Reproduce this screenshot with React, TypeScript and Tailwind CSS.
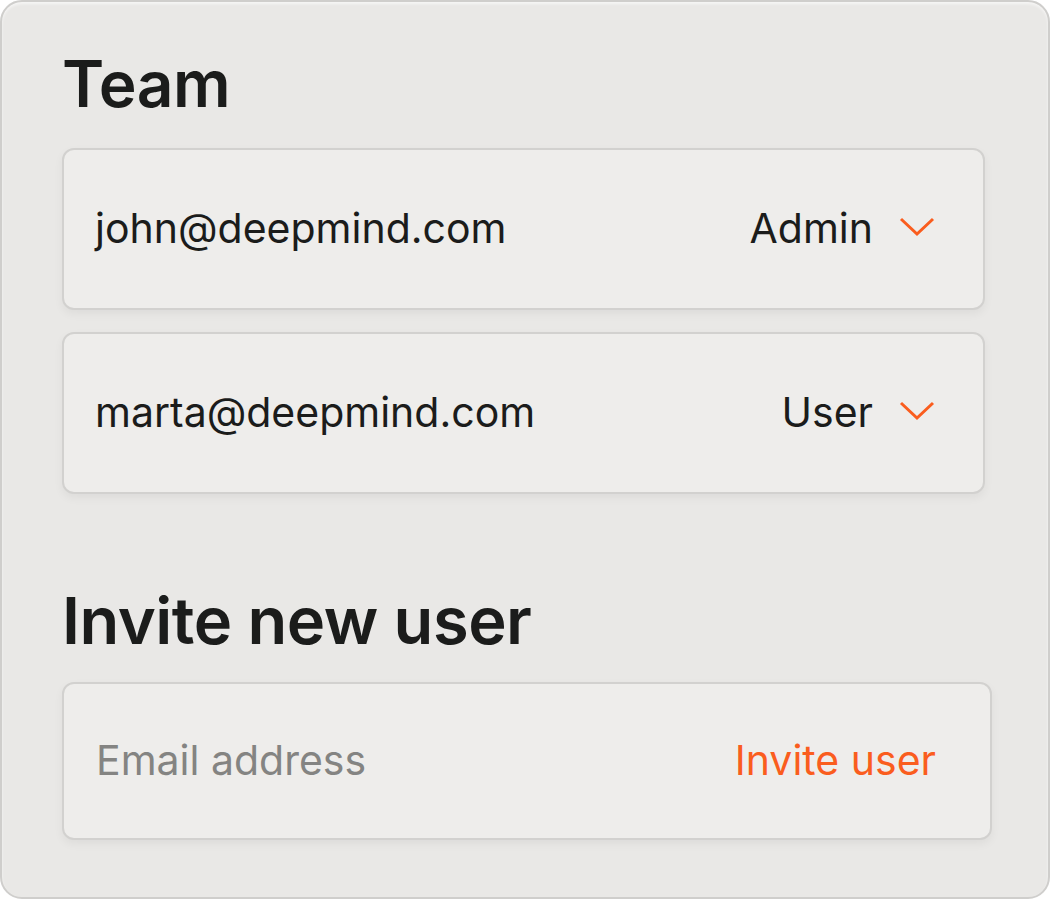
export default function App() {
  return (
    <main className="w-[1052px] h-[901px] bg-white" style={{ fontFamily: 'Inter, "Liberation Sans", sans-serif' }}>
      <div className="w-[1050px] h-[899px] rounded-[22px] border-2 border-[#cfcecc] bg-[#e9e8e6] shadow-[inset_0_2px_3px_rgba(255,255,255,0.6)] pl-[60px] pt-[50px]">
        <h1 className="text-[64px] leading-none font-semibold text-[#1b1c1b] tracking-[-0.5px]">Team</h1>

        <div className="mt-[32px] flex flex-col gap-[22px] w-[923px]">
          <Row email="john@deepmind.com" role="Admin" />
          <Row email="marta@deepmind.com" role="User" />
        </div>

        <h2 className="mt-[94px] text-[65px] leading-none font-semibold text-[#1b1c1b] tracking-[-0.5px]">Invite new user</h2>

        <div className="mt-[29px] w-[930px] h-[158px] rounded-[12px] border-2 border-[#d2d1cf] bg-[#eeedeb] shadow-[0_4px_10px_rgba(0,0,0,0.05)] flex items-center justify-between pl-[32px] pr-[54px]">
          <span className="text-[41px] text-[#848482]">Email address</span>
          <span className="text-[41px] text-[#fa5d1e]">Invite user</span>
        </div>
      </div>
    </main>
  );
}

function Row({ email, role }: { email: string; role: string }) {
  return (
    <div className="h-[162px] rounded-[12px] border-2 border-[#d2d1cf] bg-[#eeedeb] shadow-[0_4px_10px_rgba(0,0,0,0.05)] flex items-center justify-between pl-[31px] pr-[48px]">
      <span className="text-[41px] text-[#1b1c1b]">{email}</span>
      <div className="flex items-center gap-[26px]">
        <span className="text-[41px] text-[#1b1c1b]">{role}</span>
        <svg width="36" height="20" viewBox="0 0 36 20" fill="none" className="mt-[-4px]">
          <path d="M2 2 L18 17 L34 2" stroke="#fa5d1e" strokeWidth="3" />
        </svg>
      </div>
    </div>
  );
}
